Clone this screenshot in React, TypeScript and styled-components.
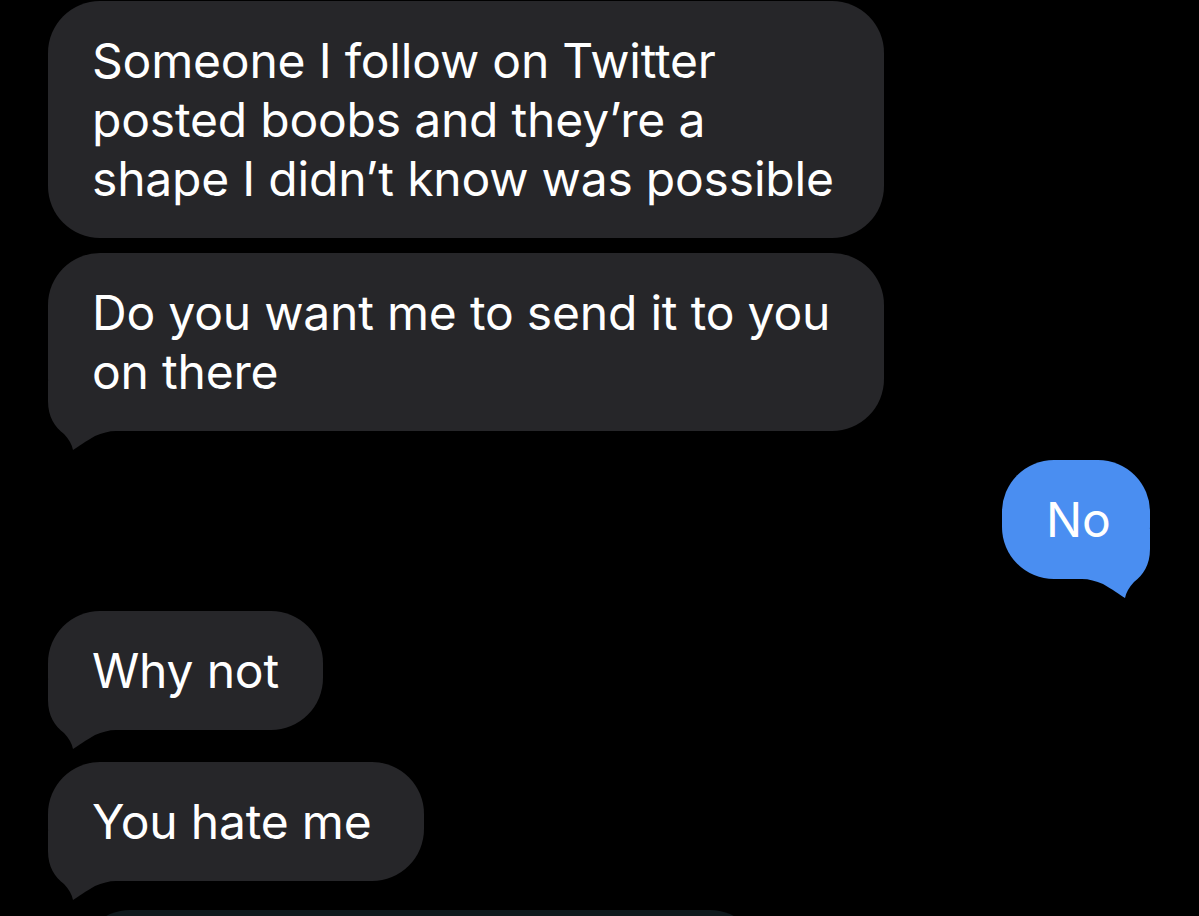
import React from "react";
import styled, { createGlobalStyle } from "styled-components";

const Global = createGlobalStyle`
  html, body { margin: 0; padding: 0; background: #000; }
  #root { height: 100vh; }
`;

const Page = styled.div`
  height: 916px;
  overflow: hidden;
  background: #000;
  display: flex;
  flex-direction: column;
  padding: 1px 49px 0 48px;
  box-sizing: border-box;
  font-family: Inter, "Open Sans", "Liberation Sans", sans-serif;
`;

const Row = styled.div<{ $out?: boolean; $gap: number }>`
  display: flex;
  justify-content: ${(p) => (p.$out ? "flex-end" : "flex-start")};
  margin-top: ${(p) => p.$gap}px;
  flex-shrink: 0;
`;

const Bubble = styled.div<{ $out?: boolean; $width?: number }>`
  position: relative;
  box-sizing: border-box;
  width: ${(p) => (p.$width ? `${p.$width}px` : "auto")};
  padding: 30px 44px;
  border-radius: 52px;
  background: ${(p) => (p.$out ? "#4a8ef1" : "#262629")};
  color: #fff;
  font-size: 48px;
  line-height: 59px;
  letter-spacing: -0.2px;
  white-space: nowrap;
  text-align: ${(p) => (p.$out ? "center" : "left")};
`;

const Ghost = styled.div`
  margin-left: 32px;
  width: 680px;
  height: 120px;
  border-radius: 50px;
  background: #0f181c;
`;

const TailSvg = styled.svg<{ $out?: boolean }>`
  position: absolute;
  bottom: -20px;
  ${(p) => (p.$out ? "right: 0;" : "left: 0;")}
  transform: ${(p) => (p.$out ? "scaleX(-1)" : "none")};
  overflow: visible;
`;

const Text = styled.span`
  position: relative;
  z-index: 1;
`;

function Tail({ out }: { out?: boolean }) {
  return (
    <TailSvg $out={out} width={80} height={70} viewBox="0 -50 80 70">
      <path
        d="M0,-50 L0,-30 C0,-14 7,-4 16,3 C21,8 24,14 25,19 C30,16 38,10 47,5 C54,2 61,0 68,0 L80,0 L80,-50 Z"
        fill={out ? "#4a8ef1" : "#262629"}
      />
    </TailSvg>
  );
}

type Msg = { lines: string[]; out?: boolean; gap: number; tail?: boolean; width?: number };

const messages: Msg[] = [
  {
    lines: ["Someone I follow on Twitter", "posted boobs and they\u2019re a", "shape I didn\u2019t know was possible"],
    gap: 0,
    width: 836,
  },
  { lines: ["Do you want me to send it to you", "on there"], gap: 15, tail: true, width: 836 },
  { lines: ["No"], out: true, gap: 29, tail: true, width: 148 },
  { lines: ["Why not"], gap: 32, tail: true },
  { lines: ["You hate me"], gap: 32, tail: true, width: 376 },
];

export default function App() {
  return (
    <>
      <Global />
      <Page>
        {messages.map((m, i) => (
          <Row key={i} $out={m.out} $gap={m.gap}>
            <Bubble $out={m.out} $width={m.width}>
              {m.tail && <Tail out={m.out} />}
              <Text>
                {m.lines.map((l, j) => (
                  <React.Fragment key={j}>
                    {j > 0 && <br />}
                    {l}
                  </React.Fragment>
                ))}
              </Text>
            </Bubble>
          </Row>
        ))}
        <Row $gap={29}>
          <Ghost />
        </Row>
      </Page>
    </>
  );
}
